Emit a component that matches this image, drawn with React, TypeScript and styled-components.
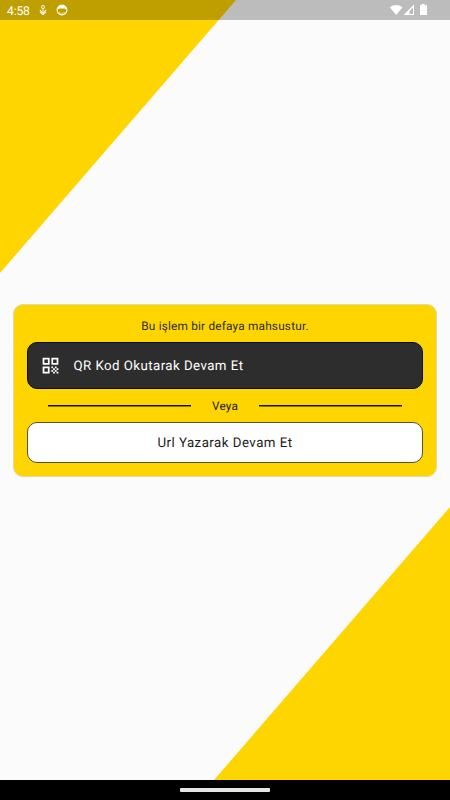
import React from 'react';
import styled, { createGlobalStyle } from 'styled-components';
import { MdQrCode } from 'react-icons/md';

const GlobalStyle = createGlobalStyle`
  * { box-sizing: border-box; }
  body {
    margin: 0;
    font-family: Roboto, "Liberation Sans", sans-serif;
    text-rendering: geometricPrecision;
  }
`;

const Screen = styled.div`
  position: relative;
  display: flex;
  flex-direction: column;
  width: 450px;
  height: 800px;
  overflow: hidden;
  background: #fbfbfb;
`;

const Corner = styled.div<{ $side: 'top' | 'bottom' }>`
  position: absolute;
  width: 236px;
  height: 273px;
  background: #ffd500;
  ${({ $side }) => $side === 'top'
    ? 'top: 0; left: 0; clip-path: polygon(0 0, 100% 0, 0 100%);'
    : 'bottom: 20px; right: 0; clip-path: polygon(100% 0, 100% 100%, 0 100%);'}
`;

const StatusBar = styled.header`
  position: relative;
  display: flex;
  align-items: center;
  height: 20px;
  padding: 0 22px 0 7px;
  background: rgba(0, 0, 0, 0.25);
  color: #fff;
`;

const Clock = styled.span`
  width: 31px;
  font-size: 12.2px;
  line-height: 20px;
  letter-spacing: -0.2px;
  padding-top: 1px;
`;

const Notifications = styled.div`
  display: flex;
  align-items: center;
  gap: 8px;
`;

const Signals = styled.div`
  display: flex;
  align-items: center;
  margin-left: auto;
`;

const Main = styled.main`
  position: relative;
  flex: 1;
  display: flex;
  flex-direction: column;
  justify-content: center;
  padding: 0 13px;
`;

const Card = styled.section`
  display: flex;
  flex-direction: column;
  height: 173px;
  margin-top: -19px;
  padding: 13px;
  border: 1px solid #e2d9a4;
  border-radius: 10px;
  background: #ffd500;
`;

const Note = styled.p`
  margin: 0;
  height: 24px;
  font-size: 11.8px;
  line-height: 17px;
  letter-spacing: 0.2px;
  text-align: center;
  color: #2d2d2d;
`;

const Button = styled.button<{ $dark?: boolean }>`
  display: flex;
  align-items: center;
  justify-content: ${({ $dark }) => ($dark ? 'flex-start' : 'center')};
  gap: 13px;
  flex-shrink: 0;
  height: ${({ $dark }) => ($dark ? 47 : 41)}px;
  padding: 0 11.5px;
  border: 1px solid ${({ $dark }) => ($dark ? '#0b0b1c' : '#55523c')};
  border-radius: 10px;
  background: ${({ $dark }) => ($dark ? '#2d2d2d' : '#fff')};
  color: ${({ $dark }) => ($dark ? '#fff' : '#1c1c1c')};
  font-family: inherit;
  font-size: 13.3px;
  font-weight: 400;
  letter-spacing: ${({ $dark }) => ($dark ? 0.43 : 0.46)}px;
  text-rendering: inherit;
`;

const Label = styled.span`
  padding-top: 1px;
`;

const Separator = styled.div`
  display: flex;
  align-items: center;
  height: 33px;
  padding: 1px 21px 0;
  font-size: 11.8px;
  letter-spacing: 0.2px;
  color: #1c1c1c;
`;

const Line = styled.span`
  width: 143px;
  height: 2px;
  background: linear-gradient(#14120c 50%, #8a7408 50%);
`;

const Or = styled.span`
  flex: 1;
  text-align: center;
`;

const NavBar = styled.footer`
  position: relative;
  display: flex;
  align-items: center;
  justify-content: center;
  height: 20px;
  background: #000;
`;

const Handle = styled.span`
  width: 90px;
  height: 4px;
  border-radius: 1px;
  background: #e6e6e6;
`;

const FlowerIcon = () => (
  <svg width="10" height="12" viewBox="0 0 10 12" fill="none" stroke="#f5efd8" strokeWidth="1.1">
    <circle cx="5" cy="3" r="1.5" />
    <path d="M5 4.500v3M1.800 6 5 8.800 8.200 6M2 8 5 10.500 8 8" />
  </svg>
);

const FaceIcon = () => (
  <svg width="12" height="12" viewBox="0 0 12 12">
    <circle cx="6" cy="6" r="4.900" fill="none" stroke="#fff" strokeWidth="1.100" />
    <path d="M1.800 3.400 3.500 1.700h5l1.700 1.700v2L8.500 4.400h-5l-1.700 1z" fill="#fff" />
    <path d="M3.200 8.300c1.200 1.300 4.400 1.300 5.600 0" fill="none" stroke="#fff" strokeWidth=".6" />
  </svg>
);

const StatusIcons = () => (
  <svg width="38" height="12" viewBox="0 0 38 12" fill="#fff">
    <path d="M0 3.500C3.500.3 8.900.3 12.400 3.500L6.200 11z" />
    <path fillRule="evenodd" d="M13.500 11 24 .5V11zM19.500 10H23V3.500l-3.500 3.500z" />
    <path d="M31.500 0h3v1.200H37V11h-7V1.200h1.500z" />
  </svg>
);

const App = () => {
  return (
    <Screen>
      <GlobalStyle />
      <Corner $side="top" />
      <Corner $side="bottom" />
      <StatusBar>
        <Clock>4:58</Clock>
        <Notifications>
          <FlowerIcon />
          <FaceIcon />
        </Notifications>
        <Signals>
          <StatusIcons />
        </Signals>
      </StatusBar>
      <Main>
        <Card>
          <Note>Bu işlem bir defaya mahsustur.</Note>
          <Button $dark>
            <MdQrCode size={21} />
            <Label>QR Kod Okutarak Devam Et</Label>
          </Button>
          <Separator>
            <Line />
            <Or>Veya</Or>
            <Line />
          </Separator>
          <Button>
            <Label>Url Yazarak Devam Et</Label>
          </Button>
        </Card>
      </Main>
      <NavBar>
        <Handle />
      </NavBar>
    </Screen>
  );
};

export default App;
